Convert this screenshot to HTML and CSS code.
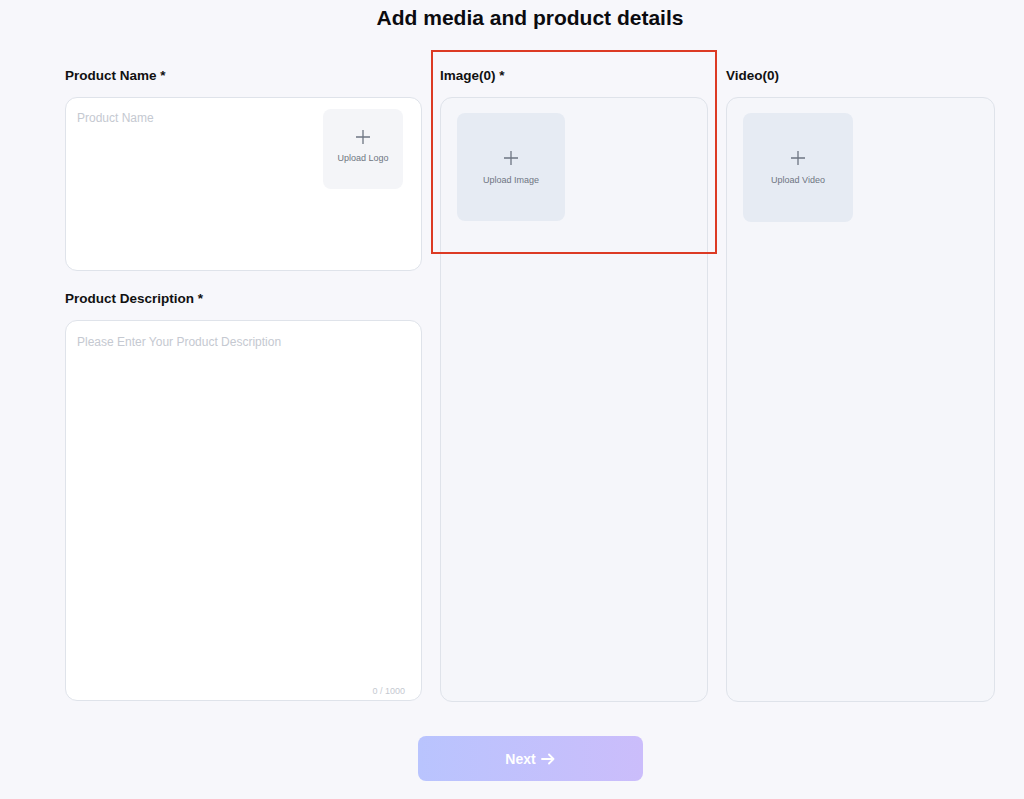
FILE: index.html
```html
<!DOCTYPE html>
<html>
<head>
<meta charset="utf-8">
<link rel="stylesheet" href="styles.css">
</head>
<body>
<div class="page">
  <h1 class="title">Add media and product details</h1>
  <div class="grid">
    <div class="col">
      <div class="label">Product Name *</div>
      <div class="box name-box">
        <div class="placeholder">Product Name</div>
        <div class="tile logo-tile">
          <svg class="plus" width="16" height="16" viewBox="0 0 16 16"><path d="M8 1v14M1 8h14" stroke="#6e7582" stroke-width="1.3" fill="none"/></svg>
          <span class="tile-text">Upload Logo</span>
        </div>
      </div>
      <div class="label label-desc">Product Description *</div>
      <div class="box desc-box">
        <div class="placeholder">Please Enter Your Product Description</div>
        <div class="count">0 / 1000</div>
      </div>
    </div>
    <div class="col">
      <div class="label">Image(0) *</div>
      <div class="box media-box">
        <div class="tile media-tile">
          <svg class="plus" width="16" height="16" viewBox="0 0 16 16"><path d="M8 1v14M1 8h14" stroke="#6e7582" stroke-width="1.3" fill="none"/></svg>
          <span class="tile-text">Upload Image</span>
        </div>
      </div>
    </div>
    <div class="col">
      <div class="label">Video(0)</div>
      <div class="box media-box">
        <div class="tile media-tile video-tile">
          <svg class="plus" width="16" height="16" viewBox="0 0 16 16"><path d="M8 1v14M1 8h14" stroke="#6e7582" stroke-width="1.3" fill="none"/></svg>
          <span class="tile-text">Upload Video</span>
        </div>
      </div>
    </div>
  </div>
  <div class="actions">
    <button class="next">Next <svg class="arrow" width="14" height="12" viewBox="0 0 14 12"><path d="M1 6h11.5M8 1.5l4.5 4.5L8 10.5" stroke="#fff" stroke-width="1.8" fill="none" stroke-linecap="round" stroke-linejoin="round"/></svg></button>
  </div>
  <div class="highlight"></div>
</div>
</body>
</html>
```
FILE: styles.css
```css
* { box-sizing: border-box; }
html, body {
  margin: 0;
  padding: 0;
  background: #f7f7fb;
  font-family: "Liberation Sans", Arial, sans-serif;
  color: #111;
}
.page {
  position: relative;
  width: 1024px;
  height: 799px;
}
.title {
  margin: 0 0 0 65px;
  width: 930px;
  padding-top: 6px;
  font-size: 21px;
  line-height: 24px;
  font-weight: bold;
  text-align: center;
  color: #0b0b0f;
}
.grid {
  display: grid;
  grid-template-columns: 357px 268px 269px;
  column-gap: 18px;
  margin-left: 65px;
  margin-top: 37px;
}
.col {
  display: flex;
  flex-direction: column;
}
.label {
  font-size: 13.5px;
  line-height: 16px;
  font-weight: bold;
  color: #111;
  margin-top: 1px;
  margin-bottom: 13px;
}
.label-desc {
  margin-top: 20px;
}
.box {
  border: 1px solid #dfe3ea;
  border-radius: 12px;
  background: #fff;
}
.name-box {
  height: 174px;
  display: flex;
  align-items: flex-start;
  padding: 11px 18px 11px 11px;
}
.placeholder {
  flex: 1;
  font-size: 12px;
  line-height: 16px;
  color: #c5c9d1;
  padding-top: 1px;
}
.tile {
  display: flex;
  flex-direction: column;
  align-items: center;
  border-radius: 8px;
}
.logo-tile {
  width: 80px;
  height: 80px;
  background: #f4f5f8;
  padding-top: 20px;
  margin-left: 1px;
}
.plus { display: block; }
.tile-text {
  font-size: 9px;
  line-height: 12px;
  color: #6e7582;
  margin-top: 7px;
}
.desc-box {
  position: relative;
  height: 381px;
  padding: 12px 11px;
}
.count {
  position: absolute;
  right: 16px;
  bottom: 3px;
  font-size: 9px;
  line-height: 12px;
  color: #c5c9d1;
}
.media-box {
  height: 605px;
  background: #f5f6fa;
  padding: 15px 16px;
}
.media-tile {
  width: 108px;
  height: 108px;
  background: #e6ebf3;
  padding-top: 37px;
}
.media-tile .tile-text { margin-top: 8px; }
.video-tile { width: 110px; height: 109px; }
.actions {
  display: flex;
  justify-content: center;
  margin-left: 65px;
  width: 930px;
  margin-top: 34px;
}
.next {
  width: 225px;
  height: 45px;
  border: none;
  border-radius: 8px;
  background: linear-gradient(90deg, #b9c4fe 0%, #cbbdfb 100%);
  color: #fff;
  font-family: "Liberation Sans", Arial, sans-serif;
  font-size: 14px;
  font-weight: bold;
  display: flex;
  align-items: center;
  justify-content: center;
  gap: 5px;
}
.arrow { display: block; }
.highlight {
  position: absolute;
  left: 431px;
  top: 50px;
  width: 286px;
  height: 204px;
  border: 2px solid #dc3a24;
}
```
